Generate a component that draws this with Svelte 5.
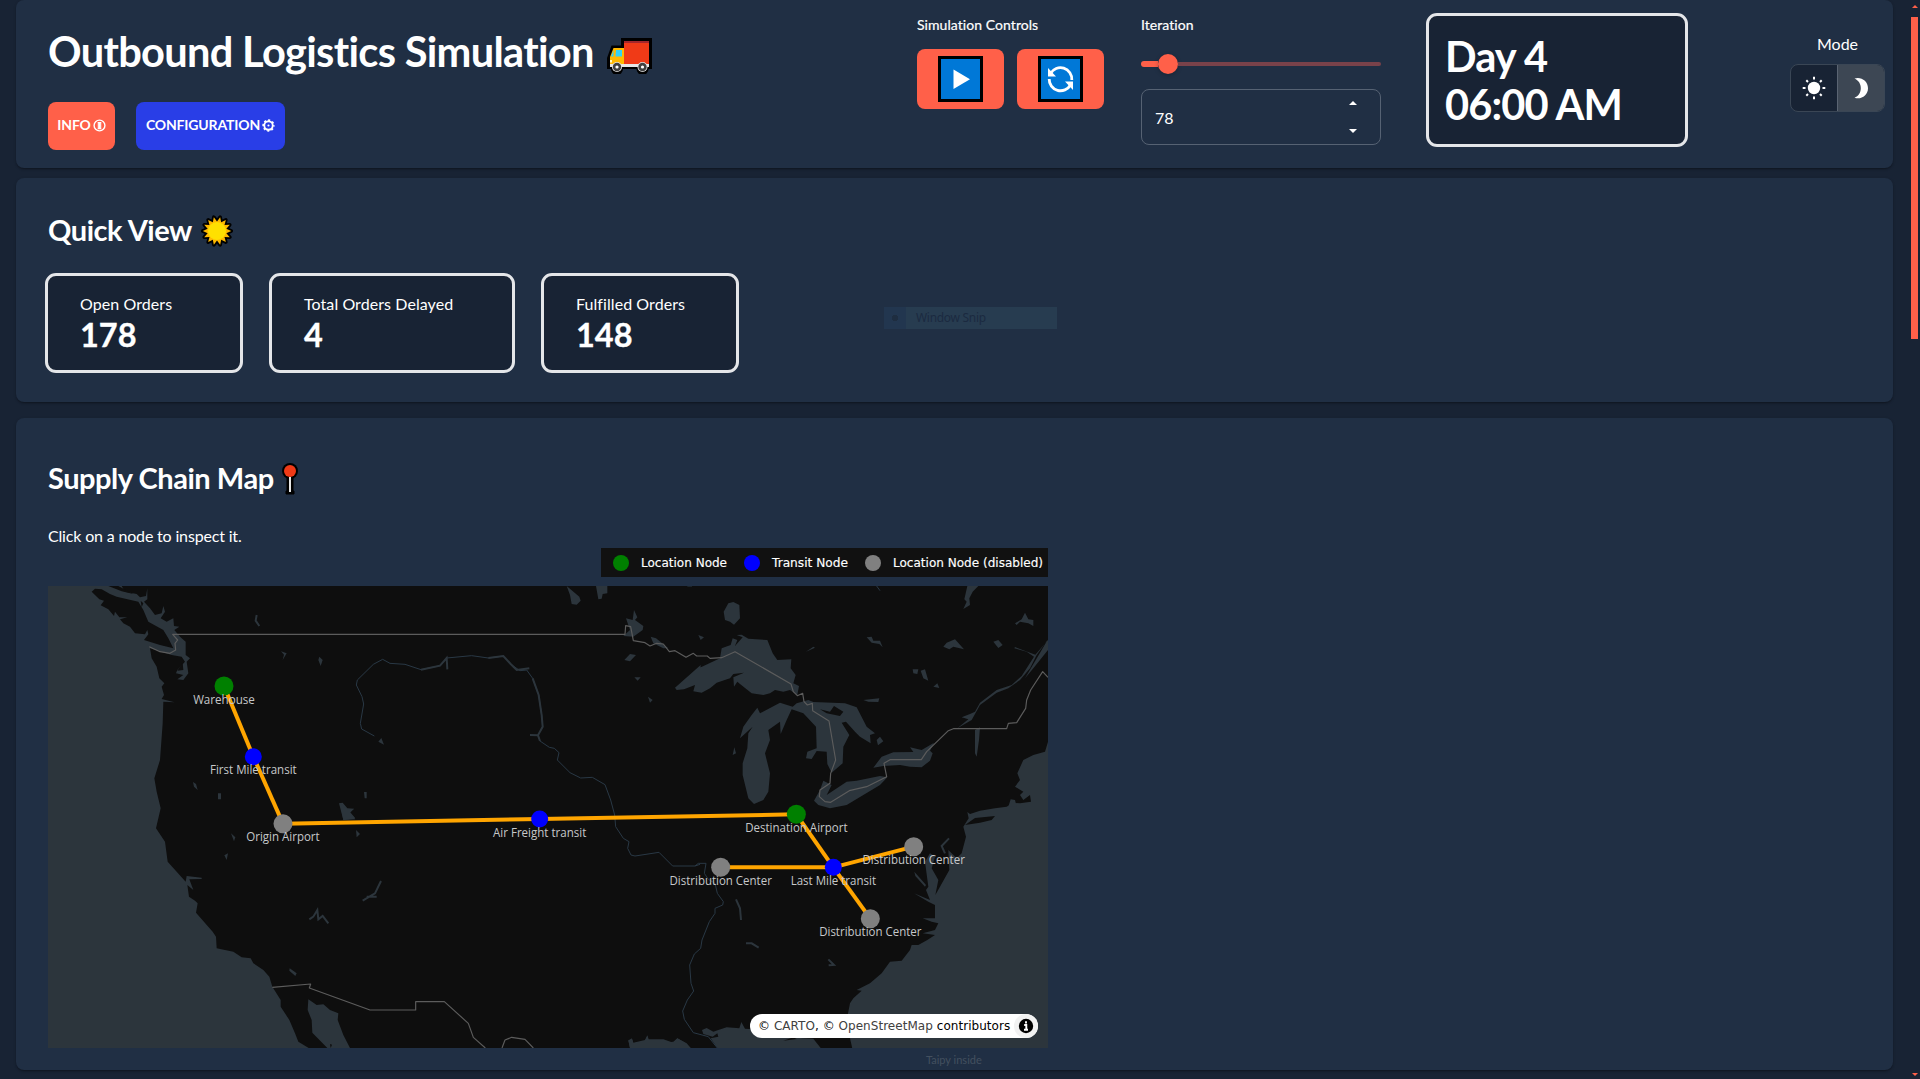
<script>
  const stats = [
    { label: 'Open Orders', value: 178, wide: false },
    { label: 'Total Orders Delayed', value: 4, wide: true },
    { label: 'Fulfilled Orders', value: 148, wide: false }
  ];

  const legend = [
    { kind: 'location', label: 'Location Node', length: 86 },
    { kind: 'transit', label: 'Transit Node', length: 76 },
    { kind: 'disabled', label: 'Location Node (disabled)', length: 150 }
  ];

  // Node positions in map units (three per pixel)
  const nodes = [
    { x: 528, y: 300, kind: 'location', label: 'Warehouse', length: 185 },
    { x: 616, y: 512, kind: 'transit', label: 'First Mile transit', length: 260 },
    { x: 705, y: 713, kind: 'disabled', label: 'Origin Airport', length: 220 },
    { x: 1475, y: 699, kind: 'transit', label: 'Air Freight transit', length: 280 },
    { x: 2245, y: 685, kind: 'location', label: 'Destination Airport', length: 307 },
    { x: 2356, y: 844, kind: 'transit', label: 'Last Mile transit', length: 256 },
    { x: 2018, y: 844, kind: 'disabled', label: 'Distribution Center', length: 307 },
    { x: 2597, y: 782, kind: 'disabled', label: 'Distribution Center', length: 307 },
    { x: 2467, y: 998, kind: 'disabled', label: 'Distribution Center', length: 307 }
  ];
  const links = [[0, 1], [1, 2], [2, 3], [3, 4], [4, 5], [5, 6], [5, 7], [5, 8]];

  // Alternating inner and outer vertices of a 14-ray star
  const sunPoints = Array.from({ length: 28 }, (_, i) => {
    const r = i % 2 ? 14.2 : 9.6;
    const a = (i * Math.PI) / 14;
    return `${(16 + r * Math.sin(a)).toFixed(2)},${(16 - r * Math.cos(a)).toFixed(2)}`;
  }).join(' ');

  let iteration = $state(78);
</script>

<div class="app">
  <main>
    <header class="panel top">
      <div class="brand">
        <h1>Outbound Logistics Simulation
          <svg class="truck" viewBox="0 0 45 36">
            <path d="M14 0H45V31H41.500A6 6 0 0 1 29.500 31H16A6 6 0 0 1 4 31H0V20L4.500 7.500H14Z" fill="#000" />
            <path d="M17 3H42V26H17Z" fill="#f03a17" />
            <path d="M17 3H42V5H17Z" fill="#a4262c" />
            <path d="M6.500 10H17V26H3V19Z" fill="#ffb900" />
            <path d="M9 12H15V18.500H8.500Z" fill="#31d2f7" />
            <path d="M6.500 12 4 18.500H6.500Z" fill="#31d2f7" />
            <path d="M3 22h2v2.500H3Z" fill="#fff8c0" />
            <path d="M3 26H42V29H3Z" fill="#e6e6e6" />
            <circle cx="10" cy="29" r="5" fill="#e6e6e6" /><circle cx="35.500" cy="29" r="5" fill="#e6e6e6" />
            <circle cx="10" cy="29" r="4.200" fill="#404040" /><circle cx="35.500" cy="29" r="4.200" fill="#404040" />
            <circle cx="10" cy="29" r="1.600" fill="#fff" /><circle cx="35.500" cy="29" r="1.600" fill="#fff" />
          </svg>
        </h1>
        <div class="actions">
          <button class="info">INFO
            <svg viewBox="0 0 12 12"><circle cx="6" cy="6" r="5" fill="none" stroke="#fff" stroke-width="1.300" /><path d="M4.300 3.200H7.700M6 3.200V9M4.300 9H7.700M4.900 3.200V9M7.100 3.200V9" stroke="#fff" stroke-width="1" fill="none" /></svg>
          </button>
          <button class="config">CONFIGURATION
            <svg viewBox="0 0 12 12"><circle cx="6" cy="6" r="3.900" fill="none" stroke="#fff" stroke-width="1.700" /><circle cx="6" cy="6" r="4.900" fill="none" stroke="#fff" stroke-width="1.600" stroke-dasharray="1.900 1.950" stroke-dashoffset="0.950" /><circle cx="6" cy="6" r="1" fill="#fff" /></svg>
          </button>
        </div>
      </div>

      <div class="controls">
        <span class="caption">Simulation Controls</span>
        <div class="pair">
          <button class="tile" aria-label="Play">
            <svg viewBox="0 0 45 46"><rect width="45" height="46" /><rect x="3" y="3" width="39" height="40" fill="#0078d7" /><path d="M15.500 13.500 32 23.200 15.500 33Z" fill="#fff" /></svg>
          </button>
          <button class="tile" aria-label="Reset">
            <svg viewBox="0 0 45 46"><rect width="45" height="46" /><rect x="3" y="3" width="39" height="40" fill="#0078d7" /><path d="M12.500 17.500A11.400 11.400 0 0 1 33.800 24M32.500 29A11.400 11.400 0 0 1 11.200 23" fill="none" stroke="#fff" stroke-width="2.800" /><path d="M10 12V20.500H18ZM35 34V25.500H27Z" fill="#fff" /></svg>
          </button>
        </div>
      </div>

      <div class="iteration">
        <span class="caption">Iteration</span>
        <div class="slider"><i class="done"></i><i class="thumb"></i><i class="rest"></i></div>
        <div class="number">
          <span>{iteration}</span>
          <div class="steps">
            <button aria-label="Increase" onclick={() => iteration++}><svg viewBox="0 0 8 4"><path d="M4 0 8 4H0Z" fill="#fff" /></svg></button>
            <button aria-label="Decrease" onclick={() => iteration--}><svg viewBox="0 0 8 4"><path d="M0 0H8L4 4Z" fill="#fff" /></svg></button>
          </div>
        </div>
      </div>

      <div class="clock"><div>Day 4</div><div>06:00 AM</div></div>

      <div class="mode">
        <span>Mode</span>
        <div class="toggle">
          <button aria-label="Light">
            <svg viewBox="0 0 24 24"><circle cx="12" cy="12" r="6.200" fill="#fff" /><path d="M12 .700V3.500M12 20.500V23.300M.700 12H3.500M20.500 12H23.300M4.300 4.300 6 6M18 18l1.700 1.700M4.300 19.700 6 18M18 6l1.700-1.700" stroke="#fff" stroke-width="2" /></svg>
          </button>
          <button class="on" aria-label="Dark">
            <svg viewBox="0 0 24 24"><path d="M5.500 2.600C12 .500 19 5 19 12.300S12 24 5.500 21.800C9.500 20 11.800 16.500 11.800 12.200S9.500 4.400 5.500 2.600Z" fill="#fff" /></svg>
          </button>
        </div>
      </div>
    </header>

    <section class="panel quick">
      <h2>Quick View
        <svg class="sun" viewBox="0 0 32 32"><polygon points={sunPoints} fill="#ffb900" stroke="#000" stroke-width="3.600" stroke-linejoin="round" /><polygon points={sunPoints} fill="#ffb900" /><circle cx="16" cy="16" r="9" fill="#ffe000" /></svg>
      </h2>
      <div class="stats">
        {#each stats as s}
          <div class="stat" class:wide={s.wide}><span>{s.label}</span><strong>{s.value}</strong></div>
        {/each}
      </div>
      <div class="snip"><i></i><span>Window Snip</span></div>
    </section>

    <section class="panel chain">
      <h2>Supply Chain Map
        <svg class="pin" viewBox="0 0 16 32"><circle cx="8" cy="8" r="8" /><path d="M5 14H11V28H12V31H4V28H5Z" stroke="#000" stroke-linejoin="round" /><path d="M8 14V29" stroke="#e6e6e6" stroke-width="2" /><circle cx="8" cy="8" r="6" fill="#f03a17" /></svg>
      </h2>
      <p>Click on a node to inspect it.</p>
      <div class="chart">
        <div class="legend">
          {#each legend as l}
            <div class="entry"><i class={l.kind}></i><svg width={l.length} height="18"><text x="0" y="13" textLength={l.length} lengthAdjust="spacingAndGlyphs">{l.label}</text></svg></div>
          {/each}
        </div>
        <div class="map">
          <svg viewBox="0 0 3000 1386">
            <rect width="3000" height="1386" fill="#0e0e0e" />
            <!-- west coast -->
            <g transform="translate(-24 -18)">
              <path class="water" d="M24 18H245L255 35 290 42 300 52 318 48 322 25V58L312 65 330 85 345 105 365 100 370 78 375 95 362 115 380 125 400 115 402 138 418 140 403 150 420 170 437 185V225L450 235 440 245 445 280 430 300 412 298 430 285 408 280 412 270 435 245 425 230 395 225 330 205 335 235 350 260 358 295 373 310 365 320 372 345 365 357 404 367 370 365 368 430 360 540 343 595 350 635 362 685 348 745 375 785 383 845 437 905 440 888 485 893V897L448 898 460 930 442 915 447 950 465 962 473 970 468 998 518 1055 528 1070 530 1105 580 1115 605 1132 632 1135 640 1150 670 1170 688 1190 697 1220 722 1260V1280L748 1320 765 1360 775 1385 806 1404H24Z" />
              <path class="land" d="M155 35 165 26 185 28 210 42 230 50 295 65 310 90 325 125 370 150 385 175 400 205 360 195 312 180 325 163 322 150 315 163 285 160 270 140 250 130 240 118 262 112 238 112 225 95 222 108 205 88 182 76 192 62 178 58Z" />
              <path class="land" d="M205 18H235L280 42 245 34ZM302 62 310 70 305 82ZM412 272 428 248 430 270Z" />
              <path class="water" d="M805 1258 830 1275 850 1273 870 1290 895 1300 893 1320 910 1365 930 1404H862L817 1358 815 1320 803 1290Z" />
              <path class="land" d="M870 1392 876 1394 872 1404Z" />
              <path class="water" d="M897 670 908 668 922 685 942 686 930 696 946 715 910 720ZM459 606 468 612 473 630 462 620ZM534 640H543V658H534ZM573 760 586 772 582 784ZM553 826 564 820 560 840ZM972 636H980V655H974ZM948 750 960 762 950 772ZM749 1165 770 1180 766 1188 748 1172ZM723 214 740 220 728 240 732 224ZM838 230 848 240 842 258 835 240ZM1015 485 1024 474 1032 494Z" />
              <path class="creek" d="M650 105 647 122 658 138M1023 903 1005 940 968 962M808 1018 820 1010 832 990 835 1018 848 1008 865 1030M980 950H1010" />
            </g>
            <!-- central rivers and lakes -->
            <g transform="translate(876 -18)">
              <path class="river" d="M103 468 65 447 61 430 71 372 66 350 49 315 52 300 100 253 128 238 150 250 195 253 243 269 300 257 320 234 395 227 445 234 490 228 515 255 540 272 560 270 578 295 596 345 605 405 608 440 594 466 600 483 628 502 643 505 657 518 652 540 690 578 722 594 757 592 795 614 812 660 824 705 827 740 850 775 867 785 863 805 873 825 885 828 957 817 998 858 1065 858 1080 853" />
              <path class="creek" d="M243 269 300 257 320 234 322 268M445 234 490 228 512 252 530 270 568 265M578 295 596 345 605 405 608 440 594 466 570 465M594 466 600 483" />
              <path class="water" d="M680 18 718 50 722 62 710 74 695 72 690 45ZM768 18H802V40L788 42 785 56 775 58ZM858 115 878 120 882 90 892 112 885 120 910 138 908 150 880 170 850 168 870 150ZM932 170 948 175 985 205 970 205 940 190ZM853 240 870 222 888 225 870 244ZM883 292 902 292 893 302ZM924 350 938 360 930 368ZM865 1382 875 1375 880 1390 915 1382 922 1368 925 1380 970 1388 1000 1385 1012 1375 1035 1388 1052 1404H870ZM0 668 25 690 42 686 30 698 46 718 10 720Z" />
            </g>
            <!-- great lakes and north east -->
            <g transform="translate(1896 -138)">
              <path class="water" d="M0 448 45 390 120 355 125 325 152 315 158 295 172 300 165 318 188 292 170 285 185 284 205 296 262 300 278 340 292 360 334 358 332 385 347 405 340 430 357 438 352 465 330 450 310 455 285 450 270 460 250 465 215 460 180 432 172 425 162 440 160 412 192 398 160 402 150 415 110 428 90 445 65 458 40 454 45 435 12 448ZM-15 443 62 375 60 400 30 428 12 448-10 450Z" />
              <path class="water" d="M180 595 190 560 215 525 232 503 240 520 300 488 338 500 350 490 385 480 400 486 495 490 530 502 560 560 585 580 570 585 572 610 540 590 525 575 498 545 485 548 508 585 490 620 488 670 455 698 442 672 440 635 410 633 395 657 378 655 382 635 410 625 408 560 370 520 335 508 320 540 302 582 300 545 265 570 270 600 255 640 270 700 265 755 250 780 222 792 205 775 188 705 188 670 202 625 205 580 218 560Z" />
              <path class="land" d="M420 508 450 515 462 498 490 515 480 528 440 520Z" />
              <path class="water" d="M402 782 420 750 430 722 455 735 440 765 500 725 530 722 600 708 622 712 600 735 550 765 500 795 450 805 415 795ZM580 683 605 650 640 637 700 636 690 622 725 630 762 608 750 632 758 640 750 662 725 682 690 680 660 675 610 678ZM590 600 600 590 610 604 594 616ZM131 215 145 190 160 186 178 195 180 235 162 254 150 245 135 240ZM55 285 72 292 62 300ZM378 335 400 320 405 323ZM560 292 575 290 580 302 600 302 608 322 598 312 575 308ZM790 320 800 308 825 298 852 328 820 320 808 328ZM940 305 955 300 968 315 955 324ZM1005 250 1025 238 1035 218 1045 238 1060 240V258L1045 250 1020 245 1010 255ZM698 388 715 388 712 402 700 400ZM722 392 735 388 745 422 730 415ZM760 440 772 430 778 444ZM550 480 598 475 595 486 565 485ZM862 138H895L878 155 868 175 870 195 850 207 860 185 853 178ZM885 570 900 562 897 600 890 650 885 640ZM163 622 168 640 158 645Z" />
              <path class="water" d="M1104 298 1070 345 1050 385 1020 420 985 445 950 458 900 495 875 540 832 565 865 538 845 532 870 522 885 515 900 488 950 450 995 435 1025 408 1062 350 1040 335 1003 325 1005 321 1066 344 1104 300V330L1060 385 1035 415Z" />
              <path class="river" d="M590 138 600 152M22 138H36" />
            </g>
            <!-- atlantic and gulf -->
            <g transform="translate(1896 612)">
              <path class="water" d="M1104-145 1095-115 1060-105 1030-90 1012-50 1020-30 1005-10 1030 5 1020 15 1030 30 1050 15 1053 35 1020 40 1000 38 980 50 945 55 900 62 870 72 862 66 866 85 850 110 858 140 845 190 830 205 805 180 808 240 780 290 766 315 775 270 755 235 765 200 750 190 735 215 745 290 738 300 750 330 702 310 745 335 765 345V385H728L755 395 775 400 765 420 728 430 765 435 742 450 715 465H695L690 480 665 512 630 515 605 550 570 580 530 600 545 602 520 625 510 640 500 690 495 712 510 745 518 780H1104Z" />
              <path class="land" d="M855 105 885 84 945 78 935 90 900 98Z" />
              <path class="water" d="M985 50 992 28 1005 30 1010 50ZM703 245 738 285 735 290 706 258Z" />
              <path class="creek" d="M807 145 785 168 795 190M168 328 180 355 183 390M198 460 215 460 236 473M445 508 462 525 446 526" />
            </g>
            <g transform="translate(1596 1062)">
              <path class="water" d="M145 300 157 298 160 308 195 300 202 286 206 298 250 298 280 308 292 295 320 310 332 324H150ZM366 270 380 264 400 275 415 270 440 262 478 265 484 246 495 266 520 268 560 290 620 292 700 296 722 324H412L392 295 415 290 412 280 398 290 370 282Z" />
              <path class="land" d="M610 302 640 292 650 297Z" />
              <path class="river" d="M345-222 355-230H378L373-200 385-182 405-170 412-140 430-115 428-105 405-95 405-80 388-55 366 0 362 25 343 42 329 75 333 130 341 153 322 180 308 213 313 238 340 278 385 290 412 324" />
            </g>
            <!-- national borders -->
            <path class="border" d="M304 182 336 197 366 202 383 192 381 172 389 162 374 145H1731L1733 119 1748 122 1756 164 1791 170 1806 180 1826 172 1846 174 1864 197 1881 194 1914 214 1936 202 1946 210H1978L1986 217 2021 215 2061 197 2229 294 2236 317 2248 329 2264 322 2268 347 2278 357 2293 352 2294 374 2343 405 2363 522 2348 562 2346 592 2316 612 2314 632 2331 647 2348 649 2404 614 2456 602 2516 572 2508 532 2526 521H2620L2636 497 2701 434 2716 428H2876L2881 412 2906 410 2933 367 2936 342 2948 312 2984 257 3000 274" />
            <path class="border" d="M673 1204 788 1194 784 1206 966 1272H1103V1247H1189L1261 1312 1276 1354 1312 1386M1362 1386 1371 1362 1391 1354 1431 1360 1456 1386" />
            {#each links as [a, b]}
              <line x1={nodes[a].x} y1={nodes[a].y} x2={nodes[b].x} y2={nodes[b].y} stroke="orange" stroke-width="12" />
            {/each}
            {#each nodes as n}
              <circle class={n.kind} cx={n.x} cy={n.y} r={n.kind === 'transit' ? 25.5 : 28.5} />
            {/each}
            {#each nodes as n}
              <text class="name" x={n.x} y={n.y + 53} textLength={n.length} lengthAdjust="spacingAndGlyphs">{n.label}</text>
            {/each}
          </svg>
          <div class="credit">
            <span>© <a href="#carto">CARTO</a>, © <a href="#osm">OpenStreetMap</a> contributors</span>
            <svg viewBox="0 0 24 24"><circle cx="12" cy="12" r="12" fill="#f2f2f2" /><circle cx="12" cy="12" r="7.200" /><path d="M12 7.200V9.400M10.200 11H12.300V15.600M10 15.800H14" stroke="#fff" stroke-width="1.900" fill="none" /></svg>
          </div>
        </div>
      </div>
      <div class="inside">Taipy inside</div>
    </section>
  </main>
  <aside class="scroll">
    <svg viewBox="0 0 6 3"><path d="M3 0 6 3H0Z" fill="#ff6049" /></svg>
    <i></i>
    <svg class="down" viewBox="0 0 6 3"><path d="M0 0H6L3 3Z" fill="#ff6049" /></svg>
  </aside>
</div>

<style>
  :global(body) { background: #182334; overflow: hidden; }
  * { box-sizing: border-box; }
  .app { display: flex; height: 1079px; overflow: hidden; color: #fff; font-family: Lato, sans-serif; font-size: 16px; }
  main { width: 1877px; margin-left: 16px; flex: none; }
  button { border: 0; padding: 0; color: inherit; font: inherit; background: none; display: flex; align-items: center; justify-content: center; }
  h1, h2, p { margin: 0; white-space: nowrap; }
  .panel { background: #202f44; border-radius: 8px; box-shadow: 0 2px 2px -1px rgba(0,0,0,.25), 0 1px 3px rgba(0,0,0,.2); }

  .top { height: 168px; display: flex; padding-left: 32px; margin-bottom: 10px; }
  .brand { width: 869px; }
  h1 { font-size: 41.6px; line-height: 50px; padding-top: 26px; letter-spacing: -0.7px; display: flex; align-items: center; }
  .truck { width: 45px; height: 36px; margin: 10px 0 0 13px; }
  .actions { display: flex; gap: 21px; margin-top: 26px; }
  .actions button { height: 48px; border-radius: 8px; font-size: 14px; font-weight: 700; gap: 2px; padding-bottom: 3px; white-space: nowrap; letter-spacing: -0.15px; }
  .actions svg { width: 13px; height: 13px; flex: none; margin-top: 1px; }
  .info { width: 67px; background: #ff6049; }
  .config { width: 149px; background: #293ee7; }
  .caption { display: block; font-size: 14px; line-height: 20px; letter-spacing: 0.06px; -webkit-text-stroke: .2px #fff; }
  .controls { width: 224px; padding-top: 15px; }
  .pair { display: flex; gap: 13px; margin-top: 14px; }
  .tile { width: 87px; height: 60px; border-radius: 8px; background: #ff6049; }
  .tile svg { width: 45px; height: 46px; }
  .iteration { width: 240px; padding-top: 15px; }
  .slider { height: 20px; margin-top: 19px; display: flex; align-items: center; }
  .done { width: 17px; height: 6px; border-radius: 3px 0 0 3px; background: #ff6049; }
  .thumb { width: 20px; height: 20px; border-radius: 50%; background: #ff6049; box-shadow: 0 1px 4px rgba(0,0,0,.25); }
  .rest { flex: 1; height: 4px; border-radius: 0 2px 2px 0; background: #79424a; }
  .number { height: 56px; margin-top: 15px; border: 1px solid #566273; border-radius: 8px; display: flex; align-items: center; justify-content: space-between; padding: 0 23px 0 13px; }
  .steps { display: flex; flex-direction: column; gap: 24px; }
  .steps svg { width: 8px; height: 4px; display: block; }
  .clock { width: 262px; height: 134px; margin: 13px 0 0 45px; border: 3px solid #e4e6e9; border-radius: 11px; background: #182334; padding: 16px 0 0 16px; font-size: 41.6px; line-height: 48px; font-weight: 700; letter-spacing: -0.9px; }
  .mode { margin: 34px 0 0 102px; width: 95px; text-align: center; line-height: 20px; }
  .toggle { display: flex; margin-top: 10px; height: 48px; border: 1px solid #3a4655; border-radius: 8px; overflow: hidden; background: #182334; }
  .toggle button { flex: 1; }
  .toggle .on { background: #3d4754; border-left: 1px solid #5a6472; }
  .toggle svg { width: 24px; height: 24px; }

  .quick { height: 224px; padding: 33px 0 0 29px; margin-bottom: 16px; position: relative; }
  h2 { font-size: 29px; line-height: 38px; letter-spacing: -0.46px; display: flex; align-items: center; padding-left: 3px; }
  .sun { width: 32px; height: 32px; margin: 2px 0 0 9px; }
  .stats { display: flex; gap: 26px; margin-top: 24px; }
  .stat { width: 198px; height: 100px; border: 3px solid #e4e6e9; border-radius: 11px; background: #182334; padding: 16px 0 0 32px; }
  .stat.wide { width: 246px; }
  .stat span, .stat strong { display: block; line-height: 24px; }
  .stat span { letter-spacing: 0.07px; }
  .stat strong { font-size: 32.5px; line-height: 37px; -webkit-text-stroke: .3px #fff; }
  .snip { position: absolute; left: 868px; top: 129px; width: 173px; height: 22px; display: flex; align-items: center; background: #273c50; color: #1b2a40; font: 12px/20px "Noto Sans", sans-serif; letter-spacing: -0.3px; }
  .snip i { width: 22px; height: 22px; margin-right: 10px; background: radial-gradient(circle, #1e2d40 3px, #22364f 3.500px); }

  .chain { height: 652px; padding: 41px 0 0 32px; }
  .chain h2 { padding: 0; }
  .pin { width: 16px; height: 32px; margin: 1px 0 0 8px; }
  p { line-height: 24px; margin-top: 27px; letter-spacing: -0.17px; }
  .chart { width: 1000px; display: flex; flex-direction: column; align-items: flex-end; }
  .legend { width: 447px; height: 29px; background: #111; display: flex; align-items: center; gap: 17px; padding-left: 12px; }
  .entry { display: flex; align-items: center; gap: 12px; }
  .entry i { width: 16px; height: 16px; border-radius: 50%; }
  .entry svg { overflow: visible; }
  .entry text { font: 12px "DejaVu Sans", sans-serif; fill: #fff; stroke: #fff; stroke-width: .15; }
  i.location { background: green; } i.transit { background: blue; } i.disabled { background: gray; }
  circle.location { fill: green; } circle.transit { fill: blue; } circle.disabled { fill: gray; }
  .map { width: 1000px; height: 462px; margin-top: 9px; display: grid; }
  .map > svg { grid-area: 1 / 1; width: 1000px; height: 462px; display: block; }
  .water { fill: #2c353c; }
  .land { fill: #0e0e0e; }
  .river { fill: none; stroke: #293845; stroke-width: 3; }
  .creek { fill: none; stroke: #2c353c; stroke-width: 6; }
  .border { fill: none; stroke: #5c5c5c; stroke-width: 3.500; stroke-linejoin: round; }
  .name { font: 37px "Open Sans", sans-serif; fill: #c6c8ca; text-anchor: middle; }
  .credit { grid-area: 1 / 1; place-self: end; margin: 0 10px 10px 0; width: 288px; height: 24px; border-radius: 12px; background: #fff; color: #000; font: 12px/24px "DejaVu Sans", sans-serif; letter-spacing: 0.04px; padding-left: 8px; display: flex; justify-content: space-between; white-space: nowrap; }
  .credit a { color: #404040; text-decoration: none; }
  .credit svg { width: 24px; height: 24px; }
  .inside { font-size: 11px; line-height: 16px; color: #43505f; margin: 4px 0 0 878px; }

  .scroll { width: 7px; margin-left: 18px; display: flex; flex-direction: column; align-items: center; padding: 5px 0 3px; }
  .scroll svg { width: 6px; height: 3px; }
  .scroll i { width: 7px; height: 322px; margin-top: 9px; background: #ff6049; }
  .scroll .down { margin-top: auto; }
</style>
